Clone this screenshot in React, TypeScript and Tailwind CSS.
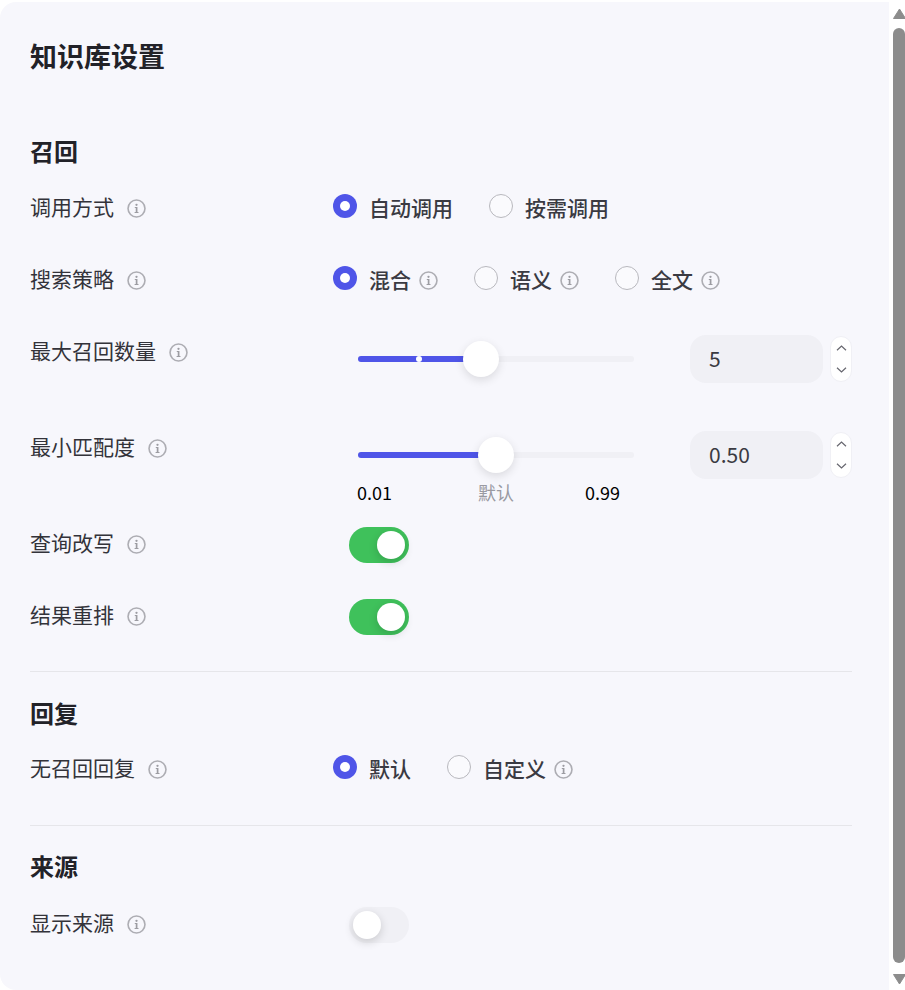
import type { ReactNode } from 'react';

function InfoIcon() {
  return (
    <svg width="19" height="19" viewBox="0 0 20 20" className="shrink-0" aria-hidden="true">
      <circle cx="10" cy="10" r="8.9" fill="none" stroke="#adadb3" strokeWidth="1.7" />
      <circle cx="10" cy="6.1" r="1.2" fill="#9c9ca2" />
      <path d="M8.2 8.5h2.8v5.2h1.1v1.1H8v-1.1h1.2v-4.1h-1z" fill="#9c9ca2" />
    </svg>
  );
}

function Radio({ label, checked, info }: { label: string; checked?: boolean; info?: boolean }) {
  return (
    <div className="flex items-center">
      {checked ? (
        <span className="mb-1 flex h-6 w-6 items-center justify-center rounded-full bg-[#4f55e8]">
          <span className="h-[10px] w-[10px] rounded-full bg-white" />
        </span>
      ) : (
        <span className="mb-1 h-6 w-6 rounded-full border border-[#b8b8be] bg-white/40" />
      )}
      <span className="ml-3 text-[21px] font-medium text-[#3a3a42]">{label}</span>
      {info && (
        <span className="ml-2 flex">
          <InfoIcon />
        </span>
      )}
    </div>
  );
}

function Toggle({ on }: { on?: boolean }) {
  return (
    <div
      className={
        on
          ? 'ml-4 flex h-9 w-[60px] items-center justify-end rounded-full bg-[#3fc15b] px-1'
          : 'ml-4 flex h-9 w-[60px] items-center justify-start rounded-full bg-[#f0f0f5] px-1'
      }
    >
      <span className="h-7 w-7 rounded-full bg-white shadow-[0_3px_10px_rgba(0,0,0,0.16)]" />
    </div>
  );
}

function Stepper({ value }: { value: string }) {
  return (
    <div className="ml-14 flex items-center">
      <div className="flex h-12 w-[133px] items-center rounded-2xl bg-[#f0f0f5] pl-[19px] text-[21px] text-[#3a3a42]">
        {value}
      </div>
      <div className="ml-[7px] flex h-[46px] w-[22px] flex-col items-center justify-center gap-[16px] rounded-full border border-[#f0f0f5] bg-white">
        <svg width="11" height="6" viewBox="0 0 11 6" fill="none" stroke="#66666e" strokeWidth="1.2">
          <path d="M1 5.2l4.5-4.2 4.5 4.2" />
        </svg>
        <svg width="11" height="6" viewBox="0 0 11 6" fill="none" stroke="#66666e" strokeWidth="1.2">
          <path d="M1 .8l4.5 4.2 4.5-4.2" />
        </svg>
      </div>
    </div>
  );
}

function Slider({ thumb, dot }: { thumb: number; dot?: number }) {
  return (
    <div className="relative ml-[25px] h-12 w-[276px]">
      <div className="absolute top-[21px] h-[6px] w-full rounded-full bg-[#f0f0f5]" />
      <div className="absolute top-[21px] h-[6px] rounded-full bg-[#4f55e8]" style={{ width: thumb }} />
      {dot !== undefined && (
        <span className="absolute top-[21px] h-[6px] w-[6px] rounded-full bg-white" style={{ left: dot - 3 }} />
      )}
      <span
        className="absolute top-[6px] h-9 w-9 rounded-full bg-white shadow-[0_3px_10px_rgba(0,0,0,0.12)]"
        style={{ left: thumb - 18 }}
      />
    </div>
  );
}

function Row({ label, children, className }: { label: string; children: ReactNode; className: string }) {
  return (
    <div className={`flex items-start ${className}`}>
      <div className="flex h-12 w-[303px] shrink-0 items-center gap-[13px] text-[21px] text-[#33333a]">
        <span className="mb-[2px]">{label}</span>
        <InfoIcon />
      </div>
      {children}
    </div>
  );
}

function Section({ title, className }: { title: string; className?: string }) {
  return <h2 className={`h-9 text-2xl font-semibold leading-9 text-[#222228] ${className ?? ''}`}>{title}</h2>;
}

export default function App() {
  return (
    <div
      className="flex h-[990px] w-[905px] overflow-hidden bg-white"
      style={{ fontFamily: '"Noto Sans CJK SC", "Noto Sans", sans-serif' }}
    >
      <main className="mt-[2px] h-[988px] w-[889px] rounded-l-2xl bg-[#f7f7fc] pl-[30px] pr-[37px] pt-[35px]">
        <h1 className="h-[38px] text-[27px] font-semibold leading-[38px] text-[#222228]">知识库设置</h1>

        <Section title="召回" className="mt-[58px]" />
        <Row label="调用方式" className="mt-[15px] h-12">
          <div className="flex h-12 items-center gap-9">
            <Radio label="自动调用" checked />
            <Radio label="按需调用" />
          </div>
        </Row>
        <Row label="搜索策略" className="mt-6 h-12">
          <div className="flex h-12 items-center gap-9">
            <Radio label="混合" checked info />
            <Radio label="语义" info />
            <Radio label="全文" info />
          </div>
        </Row>
        <Row label="最大召回数量" className="mt-6 h-24">
          <div className="mt-[7px] flex items-center">
            <Slider thumb={123} dot={61} />
            <Stepper value="5" />
          </div>
        </Row>
        <Row label="最小匹配度" className="h-24">
          <div className="mt-[7px] flex items-start">
            <div>
              <Slider thumb={138} />
              <div className="relative ml-6 h-[26px] w-[264px] text-[18px] leading-[26px]">
                <span className="absolute left-0 text-black">0.01</span>
                <span className="absolute left-[121px] text-[#9a9aa2]">默认</span>
                <span className="absolute left-[228px] text-black">0.99</span>
              </div>
            </div>
            <Stepper value="0.50" />
          </div>
        </Row>
        <Row label="查询改写" className="h-12">
          <div className="flex h-[50px] items-center">
            <Toggle on />
          </div>
        </Row>
        <Row label="结果重排" className="mt-6 h-12">
          <div className="flex h-[50px] items-center">
            <Toggle on />
          </div>
        </Row>

        <hr className="mt-[31px] border-[#e6e6ea]" />
        <Section title="回复" className="mt-[23px]" />
        <Row label="无召回回复" className="mt-[14px] h-12">
          <div className="flex h-12 items-center gap-9">
            <Radio label="默认" checked />
            <Radio label="自定义" info />
          </div>
        </Row>

        <hr className="mt-8 border-[#e6e6ea]" />
        <Section title="来源" className="mt-[22px]" />
        <Row label="显示来源" className="mt-4 h-12">
          <div className="flex h-[50px] items-center">
            <Toggle />
          </div>
        </Row>
      </main>

      <div className="ml-1 flex h-full w-3 flex-col items-center pt-2">
        <svg width="13" height="11" viewBox="0 0 13 11" fill="#8c8c8c" stroke="#8c8c8c" strokeWidth="1" strokeLinejoin="round" aria-hidden="true">
          <path d="M6.5 1L12.5 10.5H.5z" />
        </svg>
        <div className="mt-[9px] h-[935px] w-3 rounded-md bg-[#8c8c8c]" />
        <svg className="mt-[11px]" width="13" height="11" viewBox="0 0 13 11" fill="#8c8c8c" stroke="#8c8c8c" strokeWidth="1" strokeLinejoin="round" aria-hidden="true">
          <path d="M.5.5h12L6.5 10z" />
        </svg>
      </div>
    </div>
  );
}
